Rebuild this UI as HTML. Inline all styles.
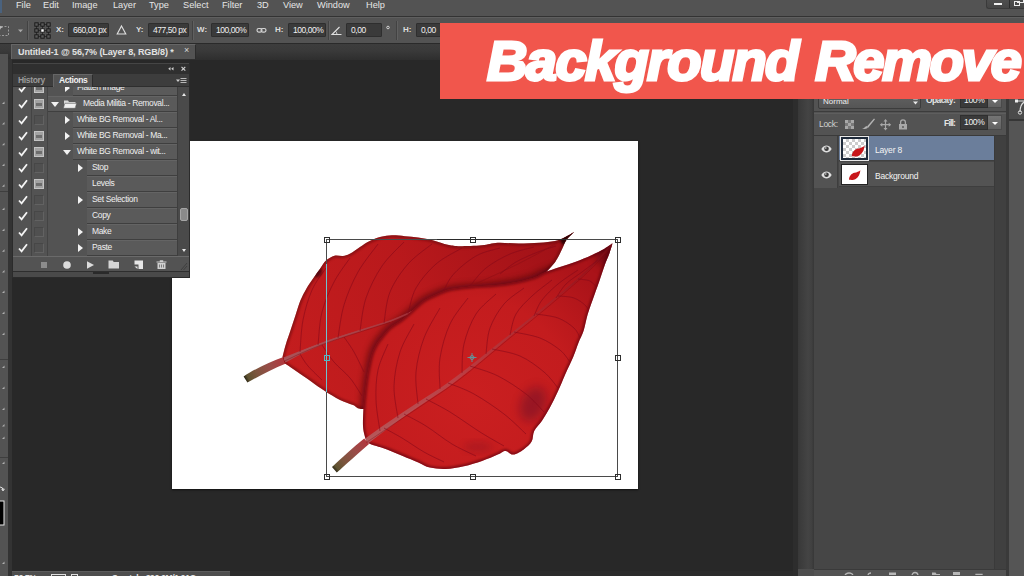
<!DOCTYPE html>
<html lang="en">
<head>
<meta charset="utf-8">
<title>Background Remove</title>
<style>
*{box-sizing:border-box;margin:0;padding:0}
html,body{width:1024px;height:576px;overflow:hidden;background:#282828}
body{position:relative;font-family:"Liberation Sans",sans-serif;font-size:9px;color:#e4e4e4;-webkit-font-smoothing:antialiased}
.abs{position:absolute}
/* ---------- top chrome ---------- */
#menubar{position:absolute;left:0;top:0;width:1024px;height:16px;background:#535353}
#menubar span{position:absolute;top:0px;font-size:9.2px;color:#e6e6e6;white-space:nowrap}
#menuline{position:absolute;left:0;top:16px;width:1024px;height:1px;background:#333}
#optbar{position:absolute;left:0;top:17px;width:1024px;height:26px;background:#535353;border-top:1px solid #5f5f5f}
#optbar .lbl{position:absolute;top:7px;font-size:8px;font-weight:bold;color:#dcdcdc;white-space:nowrap}
#optbar .fld{position:absolute;top:5px;height:14px;background:#3a3a3a;border:1px solid #2e2e2e;border-radius:1px;font-size:8.5px;color:#f0f0f0;line-height:12px;padding-left:4px;white-space:nowrap;letter-spacing:-.45px}
#optbar .sep{position:absolute;top:3px;width:1px;height:19px;background:#424242;border-right:1px solid #606060;box-sizing:content-box}
#tabbar{position:absolute;left:0;top:43px;width:1024px;height:17px;background:linear-gradient(#3d3d3d,#3a3a3a 40%,#2e2e2e);border-top:1px solid #2a2a2a}
#doctab{position:absolute;left:11px;top:44px;width:185px;height:15px;background:#535353;border-left:1px solid #666;border-top:1px solid #666;border-right:1px solid #2c2c2c}
#doctab span{position:absolute;left:6px;top:2px;font-size:9px;font-weight:bold;color:#e2e2e2;white-space:nowrap;letter-spacing:-.1px}
#doctab i{position:absolute;left:172px;top:0px;font-style:normal;font-size:9px;color:#d8d8d8}
/* ---------- left tool strip ---------- */
#ltool{position:absolute;left:0;top:54px;width:8px;height:522px;background:#535353}
#ltoolgap{position:absolute;left:8px;top:59px;width:4px;height:517px;background:#333}
/* ---------- canvas ---------- */
#canvas{position:absolute;left:12px;top:59px;width:786px;height:512px;background:#282828}
#doc{position:absolute;left:172px;top:141px;width:466px;height:348px;background:#fff;box-shadow:0 1px 2px rgba(0,0,0,.6)}
#art{position:absolute;left:0;top:0;width:1024px;height:576px;pointer-events:none}
/* ---------- banner ---------- */
#banner{position:absolute;left:440px;top:23px;width:584px;height:76px;background:#f1564c;overflow:hidden}
#banner span{position:absolute;left:47px;top:6px;font-size:56px;line-height:64px;font-weight:bold;font-style:italic;color:#fff;white-space:nowrap;letter-spacing:-1.6px;-webkit-text-stroke:3px #fff;transform-origin:0 50%}#banner span b{font-weight:bold;letter-spacing:-2.25px;margin-left:3.5px}

/* ---------- actions panel ---------- */
#ap{position:absolute;left:12px;top:63px;width:178px;height:215px;background:#535353;border:1px solid #2b2b2b;border-top:none}
#aphead{position:absolute;left:0;top:0;width:176px;height:11px;background:#2f2f2f;border-top:1px solid #454545}
#aptabs{position:absolute;left:0;top:11px;width:176px;height:13px;background:#3d3d3d;border-bottom:1px solid #2e2e2e}
#aptabs .t1{position:absolute;left:5px;top:1px;font-size:8.5px;font-weight:bold;color:#9a9a9a;letter-spacing:-.35px}
#aptabs .t2{position:absolute;left:40px;top:0;width:40px;height:13px;background:#535353;border-left:1px solid #666;border-right:1px solid #2c2c2c;border-top:1px solid #666}
#aptabs .t2 span{position:absolute;left:5px;top:0px;font-size:8.5px;font-weight:bold;color:#f0f0f0;letter-spacing:-.42px}
#aplist{position:absolute;left:0;top:24px;width:176px;height:169px;overflow:hidden;background:#535353}
.row{position:absolute;left:0;width:165px;height:16px}
.row .bg{position:absolute;top:0;right:0;height:16px;background:#5a5a5a;border-top:1px solid #646464;border-bottom:1px solid #3f3f3f}
.row .tx{position:absolute;top:2px;font-size:8.5px;color:#efefef;white-space:nowrap;letter-spacing:-.35px}
.row .ck{position:absolute;left:5px;top:3px;width:10px;height:10px}
.row .bx{position:absolute;left:21px;top:3px;width:10px;height:10px;border:1px solid #474747;border-right-color:#626262;border-bottom-color:#626262;background:#505050}
.row .bx.on{background:#a2a2a2;border-color:#c4c4c4}
.row .bx.on:after{content:"";position:absolute;left:1px;top:3px;width:6px;height:3px;background:#6e6e6e}
.row .tri{position:absolute;top:4px;width:0;height:0;border-left:5px solid #f2f2f2;border-top:4px solid transparent;border-bottom:4px solid transparent}
.row .trd{position:absolute;top:6px;width:0;height:0;border-top:5px solid #f2f2f2;border-left:4px solid transparent;border-right:4px solid transparent}
#apv1{position:absolute;left:18px;top:0;width:1px;height:169px;background:#444}
#apv2{position:absolute;left:34px;top:0;width:1px;height:169px;background:#444}
#apsb{position:absolute;left:164px;top:0;width:12px;height:169px;background:#4a4a4a;border-left:1px solid #3e3e3e}
#apsb .th{position:absolute;left:2px;top:121px;width:8px;height:13px;background:#8a8a8a;border-radius:2px;border:1px solid #a5a5a5}
#apsb .ua{position:absolute;left:4px;top:6px;width:0;height:0;border-bottom:3px solid #e8e8e8;border-left:2.5px solid transparent;border-right:2.5px solid transparent}
#apsb .da{position:absolute;left:4px;top:162px;width:0;height:0;border-top:3px solid #e8e8e8;border-left:2.5px solid transparent;border-right:2.5px solid transparent}
#apbar{position:absolute;left:0;top:193px;width:176px;height:15px;background:#535353;border-top:1px solid #6a6a6a}
#apfoot{position:absolute;left:0;top:208px;width:176px;height:6px;background:#4a4a4a;border-top:1px solid #2e2e2e}
#apfoot:after{content:"";position:absolute;left:80px;top:0;width:16px;height:2px;background:#2a2a2a}

/* ---------- right dock ---------- */
#rgrad{position:absolute;left:793px;top:59px;width:21px;height:517px;background:linear-gradient(90deg,#2d2d2d 0,#2d2d2d 5px,#383838 5px,#444 15px,#404040 19px,#393939 20px,#393939 21px)}
#rp{position:absolute;left:814px;top:59px;width:192px;height:517px;background:#535353}
#rp .r1{position:absolute;left:0;top:40px;width:192px;height:13px;background:#535353;border-bottom:1px solid #3c3c3c}
#rp .r2{position:absolute;left:0;top:54px;width:192px;height:23px;background:#535353;border-top:1px solid #5e5e5e;border-bottom:1px solid #3a3a3a}
#rp .sel{position:absolute;left:4px;top:29px;width:103px;height:21px;background:linear-gradient(#666,#555);border:1px solid #3c3c3c;border-radius:2px}
#rp .sel span{position:absolute;left:4px;top:8px;font-size:8px;color:#eee}
#rp .lb{position:absolute;font-size:8.5px;font-weight:bold;color:#e4e4e4;white-space:nowrap;letter-spacing:-.3px}
#rp .vb{position:absolute;width:28px;height:15px;background:#3a3a3a;border:1px solid #2f2f2f;font-size:8.5px;color:#f2f2f2;line-height:13px;padding-left:3px;letter-spacing:-.3px}
#rp .ab{position:absolute;width:14px;height:15px;background:linear-gradient(#747474,#626262);border:1px solid #4a4a4a;border-left:none}
#rp .ab:after{content:"";position:absolute;left:4px;top:6px;width:0;height:0;border-top:3px solid #fff;border-left:3px solid transparent;border-right:3px solid transparent}
#llist{position:absolute;left:0;top:77px;width:192px;height:434px;background:#464646}
#llist .eyecol{position:absolute;left:0;top:0;width:24px;height:52px;background:#535353;border-right:1px solid #3e3e3e}
#llist .lrow{position:absolute;left:25px;width:155px;height:25px;background:#535353;border-bottom:1px solid #3e3e3e}
#llist .lrow.on{background:#6b7e9b}
#llist .lrow span{position:absolute;left:36px;top:9px;font-size:8.5px;color:#f4f4f4;letter-spacing:-.2px}
#llist .th{position:absolute;left:2px;top:2px;width:27px;height:21px;background:#fff;border:1px solid #222;overflow:hidden}
#llist .on .th{outline:1px solid #e8e8e8;border:2px solid #1e2a3a;left:2px;top:1px;width:27px;height:23px}
#lsb{position:absolute;left:180px;top:77px;width:12px;height:434px;background:#404040;border-left:1px solid #3a3a3a}
#lfoot{position:absolute;left:0;top:510px;width:192px;height:7px;background:#535353;border-top:1px solid #3a3a3a}
#fr{position:absolute;left:1006px;top:59px;width:18px;height:517px;background:#555;border-left:3px solid #3a3a3a}
#fr .top{position:absolute;left:0;top:0;width:15px;height:62px;overflow:hidden;background:#4b4b4b;border-bottom:2px solid #363636}

#pslogo{position:absolute;left:0;top:0;width:2px;height:13px;background:#4a627e}
#winbtn{position:absolute;left:986px;top:0;width:38px;height:9px;background:linear-gradient(#4e4e4e,#464646);border:1px solid #3a3a3a;border-top:none;border-right:none;border-radius:0 0 0 3px}
#winbtn:before{content:"";position:absolute;left:7px;top:3px;width:8px;height:2px;background:#f0f0f0}
#winbtn:after{content:"";position:absolute;left:22px;top:0;width:1px;height:8px;background:#2c2c2c}
#winbtn i{position:absolute;left:27px;top:1px;width:6px;height:5px;border:1.5px solid #eee}#winbtn b{position:absolute;left:30px;top:-2px;width:7px;height:5px;border:1.5px solid #eee;border-left:none}
#status{position:absolute;left:12px;top:571px;width:218px;height:5px;background:#4e4e4e;border-top:1px solid #5c5c5c;overflow:hidden}
#status span{position:absolute;top:1px;font-size:8.5px;font-weight:bold;color:#e6e6e6;white-space:nowrap;letter-spacing:-.3px}
#hscroll{position:absolute;left:230px;top:571px;width:563px;height:5px;background:#2b2b2b}#rcorner{position:absolute;left:798px;top:569px;width:16px;height:7px;background:#4d4d4d}
</style>
</head>
<body>
<!-- canvas -->
<div id="canvas"></div>
<div id="doc"></div>
<svg id="art" width="1024" height="576" viewBox="0 0 1024 576">
<defs>
<linearGradient id="gb" x1="290" y1="380" x2="560" y2="240" gradientUnits="userSpaceOnUse"><stop offset="0" stop-color="#c41d1e"/><stop offset=".5" stop-color="#b9191c"/><stop offset="1" stop-color="#a01117"/></linearGradient>
<radialGradient id="gf" cx="470" cy="400" r="170" gradientUnits="userSpaceOnUse"><stop offset="0" stop-color="#ca1f20"/><stop offset=".6" stop-color="#c31c1e"/><stop offset="1" stop-color="#aa1319"/></radialGradient>
<linearGradient id="gs1" x1="245" y1="379" x2="284" y2="360" gradientUnits="userSpaceOnUse"><stop offset="0" stop-color="#2a2414"/><stop offset=".08" stop-color="#5e5230"/><stop offset=".3" stop-color="#7c553e"/><stop offset=".65" stop-color="#9a4c48"/><stop offset="1" stop-color="#b2383e"/></linearGradient>
<linearGradient id="gs2" x1="334" y1="470" x2="366" y2="441" gradientUnits="userSpaceOnUse"><stop offset="0" stop-color="#2a2414"/><stop offset=".08" stop-color="#5e5230"/><stop offset=".3" stop-color="#7c553e"/><stop offset=".65" stop-color="#9a4c48"/><stop offset="1" stop-color="#b2383e"/></linearGradient>
<linearGradient id="gmv" x1="366" y1="441" x2="612" y2="244" gradientUnits="userSpaceOnUse"><stop offset="0" stop-color="#b45a5c" stop-opacity=".95"/><stop offset=".35" stop-color="#b8484e" stop-opacity=".8"/><stop offset=".75" stop-color="#a2222a" stop-opacity=".6"/><stop offset="1" stop-color="#7a0c16" stop-opacity=".6"/></linearGradient>
<linearGradient id="gmb" x1="284" y1="360" x2="420" y2="308" gradientUnits="userSpaceOnUse"><stop offset="0" stop-color="#a8555a" stop-opacity=".95"/><stop offset="1" stop-color="#a8343c" stop-opacity=".6"/></linearGradient>
<clipPath id="cb"><path d="M282.5 357.0C282.5 357.0 284.4 348.9 285.8 344.4C287.2 339.9 289.1 334.7 290.7 329.8C292.3 324.9 293.9 320.1 295.5 315.2C297.1 310.3 298.6 305.1 300.4 300.6C302.2 296.1 304.3 292.3 306.5 288.4C308.7 284.5 311.6 280.6 313.8 277.4C316.0 274.1 317.9 271.7 319.9 268.9C321.9 266.1 323.6 262.8 326.0 260.6C328.4 258.4 331.7 256.5 334.5 255.7C337.3 254.9 340.4 256.4 343.0 256.0C345.6 255.6 347.5 255.0 350.3 253.5C353.1 252.0 356.8 249.1 360.0 247.0C363.2 244.9 366.3 242.7 369.8 241.0C373.3 239.3 377.3 237.8 381.0 236.8C384.7 235.9 388.0 235.4 392.0 235.3C396.0 235.2 400.7 235.8 405.0 236.2C409.3 236.6 413.8 237.0 418.0 237.6C422.2 238.2 426.3 238.7 430.0 239.5C433.7 240.3 436.8 241.5 440.0 242.4C443.2 243.3 445.7 244.4 449.0 245.0C452.3 245.6 454.5 246.1 460.0 246.2C465.5 246.2 475.7 245.9 482.0 245.3C488.3 244.7 491.6 243.0 497.7 242.7C503.8 242.4 511.6 243.5 518.5 243.5C525.5 243.5 533.3 243.1 539.4 242.7C545.5 242.3 550.7 241.9 555.0 241.0C559.3 240.1 562.1 238.5 565.4 237.0C568.6 235.5 574.5 231.8 574.5 231.8C574.5 231.8 568.7 237.0 566.7 239.6C564.8 242.2 564.3 244.4 562.8 247.4C561.3 250.4 559.8 254.4 557.6 257.9C555.4 261.4 556.1 261.3 549.8 268.3C543.5 275.3 536.6 281.4 520.0 300.0C503.4 318.6 470.0 362.5 450.0 380.0C430.0 397.5 414.4 400.2 400.0 405.0C385.6 409.8 371.4 409.0 363.6 409.0C355.8 409.0 356.9 406.5 353.0 405.0C349.1 403.5 344.8 402.4 340.0 400.0C335.2 397.6 329.2 393.9 324.5 390.8C319.8 387.8 316.2 385.0 311.5 381.7C306.8 378.4 300.4 374.0 296.0 371.0C291.6 368.0 285.0 363.6 285.0 363.6C285.0 363.6 282.5 357.0 282.5 357.0Z"/></clipPath><clipPath id="cf"><path d="M366.0 440.0C366.0 440.0 365.0 437.3 364.5 435.0C364.0 432.7 363.2 430.2 363.0 426.0C362.8 421.8 363.1 415.7 363.4 410.0C363.7 404.3 364.3 398.0 365.0 392.0C365.7 386.0 366.4 380.0 367.5 373.9C368.6 367.8 370.0 360.4 371.4 355.6C372.8 350.8 374.5 347.8 376.0 345.0C377.5 342.2 378.2 341.4 380.5 338.6C382.8 335.8 385.9 331.3 389.6 328.0C393.3 324.7 398.8 322.0 402.7 319.0C406.6 316.0 409.5 313.0 413.0 310.0C416.5 307.0 419.6 303.4 423.5 300.8C427.4 298.2 431.9 296.3 436.5 294.3C441.1 292.3 444.9 290.3 450.8 289.0C456.7 287.7 464.8 287.1 471.7 286.5C478.6 285.9 485.6 285.8 492.5 285.2C499.4 284.6 506.4 283.9 513.3 282.6C520.2 281.3 528.8 279.1 534.0 277.4C539.2 275.7 540.3 273.9 544.6 272.2C548.9 270.5 554.8 268.8 560.0 267.0C565.2 265.2 570.5 263.7 575.8 261.7C581.0 259.7 586.7 257.4 591.5 255.2C596.3 253.0 601.0 250.7 604.5 248.7C608.0 246.7 612.5 243.3 612.5 243.3C612.5 243.3 611.0 248.9 609.7 252.6C608.4 256.3 606.2 260.9 604.5 265.7C602.8 270.5 601.2 275.7 599.3 281.3C597.3 286.9 594.8 293.9 592.8 299.5C590.8 305.1 589.0 309.8 587.5 315.0C586.0 320.2 585.1 326.1 583.6 330.8C582.1 335.5 580.1 338.6 578.4 343.0C576.7 347.4 575.4 351.9 573.2 357.0C571.0 362.1 568.0 368.1 565.4 373.9C562.8 379.7 560.2 386.4 557.6 392.0C555.0 397.6 552.4 402.9 549.8 407.7C547.2 412.5 544.6 416.8 542.0 420.7C539.4 424.6 535.9 427.5 534.2 431.0C532.5 434.5 533.4 438.5 531.6 441.6C529.9 444.7 526.8 447.2 523.7 449.4C520.7 451.6 516.3 454.4 513.3 454.6C510.3 454.9 508.1 450.9 505.5 450.9C502.9 450.9 501.6 452.9 497.7 454.6C493.8 456.3 487.6 459.1 482.0 461.0C476.4 462.9 470.0 465.0 463.9 466.3C457.8 467.6 451.2 468.8 445.6 469.0C440.0 469.2 434.6 468.7 430.0 467.6C425.4 466.5 422.9 464.3 418.3 462.4C413.8 460.4 407.9 458.1 402.7 455.9C397.5 453.7 392.2 451.3 387.0 449.4C381.8 447.5 374.8 445.5 371.4 444.4C368.0 443.3 366.8 442.6 366.8 442.6C366.8 442.6 366.0 440.0 366.0 440.0Z"/></clipPath>
<filter id="bl3" x="-20%" y="-20%" width="140%" height="140%"><feGaussianBlur stdDeviation="3"/></filter>
<filter id="bl1" x="-20%" y="-20%" width="140%" height="140%"><feGaussianBlur stdDeviation="1.2"/></filter>
<filter id="bl5" x="-50%" y="-50%" width="200%" height="200%"><feGaussianBlur stdDeviation="5"/></filter>
</defs>
<path d="M243.6 376.6L247.4 382.6C258 376.600 272 369 286 363.400L283.500 357C270 361.600 254 369.400 243.600 376.600Z" fill="url(#gs1)"/>
<path d="M282.5 357.0C282.5 357.0 284.4 348.9 285.8 344.4C287.2 339.9 289.1 334.7 290.7 329.8C292.3 324.9 293.9 320.1 295.5 315.2C297.1 310.3 298.6 305.1 300.4 300.6C302.2 296.1 304.3 292.3 306.5 288.4C308.7 284.5 311.6 280.6 313.8 277.4C316.0 274.1 317.9 271.7 319.9 268.9C321.9 266.1 323.6 262.8 326.0 260.6C328.4 258.4 331.7 256.5 334.5 255.7C337.3 254.9 340.4 256.4 343.0 256.0C345.6 255.6 347.5 255.0 350.3 253.5C353.1 252.0 356.8 249.1 360.0 247.0C363.2 244.9 366.3 242.7 369.8 241.0C373.3 239.3 377.3 237.8 381.0 236.8C384.7 235.9 388.0 235.4 392.0 235.3C396.0 235.2 400.7 235.8 405.0 236.2C409.3 236.6 413.8 237.0 418.0 237.6C422.2 238.2 426.3 238.7 430.0 239.5C433.7 240.3 436.8 241.5 440.0 242.4C443.2 243.3 445.7 244.4 449.0 245.0C452.3 245.6 454.5 246.1 460.0 246.2C465.5 246.2 475.7 245.9 482.0 245.3C488.3 244.7 491.6 243.0 497.7 242.7C503.8 242.4 511.6 243.5 518.5 243.5C525.5 243.5 533.3 243.1 539.4 242.7C545.5 242.3 550.7 241.9 555.0 241.0C559.3 240.1 562.1 238.5 565.4 237.0C568.6 235.5 574.5 231.8 574.5 231.8C574.5 231.8 568.7 237.0 566.7 239.6C564.8 242.2 564.3 244.4 562.8 247.4C561.3 250.4 559.8 254.4 557.6 257.9C555.4 261.4 556.1 261.3 549.8 268.3C543.5 275.3 536.6 281.4 520.0 300.0C503.4 318.6 470.0 362.5 450.0 380.0C430.0 397.5 414.4 400.2 400.0 405.0C385.6 409.8 371.4 409.0 363.6 409.0C355.8 409.0 356.9 406.5 353.0 405.0C349.1 403.5 344.8 402.4 340.0 400.0C335.2 397.6 329.2 393.9 324.5 390.8C319.8 387.8 316.2 385.0 311.5 381.7C306.8 378.4 300.4 374.0 296.0 371.0C291.6 368.0 285.0 363.6 285.0 363.6C285.0 363.6 282.5 357.0 282.5 357.0Z" fill="url(#gb)"/>
<g clip-path="url(#cb)">
<path d="M282.5 357.0C282.5 357.0 284.4 348.9 285.8 344.4C287.2 339.9 289.1 334.7 290.7 329.8C292.3 324.9 293.9 320.1 295.5 315.2C297.1 310.3 298.6 305.1 300.4 300.6C302.2 296.1 304.3 292.3 306.5 288.4C308.7 284.5 311.6 280.6 313.8 277.4C316.0 274.1 317.9 271.7 319.9 268.9C321.9 266.1 323.6 262.8 326.0 260.6C328.4 258.4 331.7 256.5 334.5 255.7C337.3 254.9 340.4 256.4 343.0 256.0C345.6 255.6 347.5 255.0 350.3 253.5C353.1 252.0 356.8 249.1 360.0 247.0C363.2 244.9 366.3 242.7 369.8 241.0C373.3 239.3 377.3 237.8 381.0 236.8C384.7 235.9 388.0 235.4 392.0 235.3C396.0 235.2 400.7 235.8 405.0 236.2C409.3 236.6 413.8 237.0 418.0 237.6C422.2 238.2 426.3 238.7 430.0 239.5C433.7 240.3 436.8 241.5 440.0 242.4C443.2 243.3 445.7 244.4 449.0 245.0C452.3 245.6 454.5 246.1 460.0 246.2C465.5 246.2 475.7 245.9 482.0 245.3C488.3 244.7 491.6 243.0 497.7 242.7C503.8 242.4 511.6 243.5 518.5 243.5C525.5 243.5 533.3 243.1 539.4 242.7C545.5 242.3 550.7 241.9 555.0 241.0C559.3 240.1 562.1 238.5 565.4 237.0C568.6 235.5 574.5 231.8 574.5 231.8C574.5 231.8 568.7 237.0 566.7 239.6C564.8 242.2 564.3 244.4 562.8 247.4C561.3 250.4 559.8 254.4 557.6 257.9C555.4 261.4 556.1 261.3 549.8 268.3C543.5 275.3 536.6 281.4 520.0 300.0C503.4 318.6 470.0 362.5 450.0 380.0C430.0 397.5 414.4 400.2 400.0 405.0C385.6 409.8 371.4 409.0 363.6 409.0C355.8 409.0 356.9 406.5 353.0 405.0C349.1 403.5 344.8 402.4 340.0 400.0C335.2 397.6 329.2 393.9 324.5 390.8C319.8 387.8 316.2 385.0 311.5 381.7C306.8 378.4 300.4 374.0 296.0 371.0C291.6 368.0 285.0 363.6 285.0 363.6C285.0 363.6 282.5 357.0 282.5 357.0Z" fill="none" stroke="#5e0710" stroke-width="4" opacity=".55" filter="url(#bl1)"/>
<path d="M366.0 440.0C366.0 440.0 365.0 437.3 364.5 435.0C364.0 432.7 363.2 430.2 363.0 426.0C362.8 421.8 363.1 415.7 363.4 410.0C363.7 404.3 364.3 398.0 365.0 392.0C365.7 386.0 366.4 380.0 367.5 373.9C368.6 367.8 370.0 360.4 371.4 355.6C372.8 350.8 374.5 347.8 376.0 345.0C377.5 342.2 378.2 341.4 380.5 338.6C382.8 335.8 385.9 331.3 389.6 328.0C393.3 324.7 398.8 322.0 402.7 319.0C406.6 316.0 409.5 313.0 413.0 310.0C416.5 307.0 419.6 303.4 423.5 300.8C427.4 298.2 431.9 296.3 436.5 294.3C441.1 292.3 444.9 290.3 450.8 289.0C456.7 287.7 464.8 287.1 471.7 286.5C478.6 285.9 485.6 285.8 492.5 285.2C499.4 284.6 506.4 283.9 513.3 282.6C520.2 281.3 528.8 279.1 534.0 277.4C539.2 275.7 540.3 273.9 544.6 272.2C548.9 270.5 554.8 268.8 560.0 267.0C565.2 265.2 570.5 263.7 575.8 261.7C581.0 259.7 586.7 257.4 591.5 255.2C596.3 253.0 601.0 250.7 604.5 248.7C608.0 246.7 612.5 243.3 612.5 243.3C612.5 243.3 611.0 248.9 609.7 252.6C608.4 256.3 606.2 260.9 604.5 265.7C602.8 270.5 601.2 275.7 599.3 281.3C597.3 286.9 594.8 293.9 592.8 299.5C590.8 305.1 589.0 309.8 587.5 315.0C586.0 320.2 585.1 326.1 583.6 330.8C582.1 335.5 580.1 338.6 578.4 343.0C576.7 347.4 575.4 351.9 573.2 357.0C571.0 362.1 568.0 368.1 565.4 373.9C562.8 379.7 560.2 386.4 557.6 392.0C555.0 397.6 552.4 402.9 549.8 407.7C547.2 412.5 544.6 416.8 542.0 420.7C539.4 424.6 535.9 427.5 534.2 431.0C532.5 434.5 533.4 438.5 531.6 441.6C529.9 444.7 526.8 447.2 523.7 449.4C520.7 451.6 516.3 454.4 513.3 454.6C510.3 454.9 508.1 450.9 505.5 450.9C502.9 450.9 501.6 452.9 497.7 454.6C493.8 456.3 487.6 459.1 482.0 461.0C476.4 462.9 470.0 465.0 463.9 466.3C457.8 467.6 451.2 468.8 445.6 469.0C440.0 469.2 434.6 468.7 430.0 467.6C425.4 466.5 422.9 464.3 418.3 462.4C413.8 460.4 407.9 458.1 402.7 455.9C397.5 453.7 392.2 451.3 387.0 449.4C381.8 447.5 374.8 445.5 371.4 444.4C368.0 443.3 366.8 442.6 366.8 442.6C366.8 442.6 366.0 440.0 366.0 440.0Z" fill="#3c040a" opacity=".6" filter="url(#bl3)" transform="translate(-3,-2.500)"/>
<path d="M283.500 357.500C300 351 318 343.800 334 338.300C352 332.300 372 326.300 390 320.500L420 307.600L420 308.400L390 322C372 328 352 334.200 334 340.400C318 346 300 354 285.500 362.500Z" fill="url(#gmb)"/>
<path d="M284 360C300 352 318 344.500 334 339C352 333 372 327 390 321C400 317.500 410 313 420 308" fill="none" stroke="url(#gmb)" stroke-width="1.6"/>
<path d="M284 361.300C300 353.300 318 345.800 334 340.300C352 334.300 372 328.300 390 322.300" fill="none" stroke="#7c0b14" stroke-width=".7" opacity=".6"/>
<path d="M300.0 352.0C300.5 346.7 301.0 330.3 303.0 320.0C305.0 309.7 308.2 298.7 312.0 290.0C315.8 281.3 323.7 271.7 326.0 268.0" fill="none" stroke="#85091a" stroke-width="1" opacity="0.58"/>
<path d="M318.0 345.0C318.7 339.5 319.3 322.5 322.0 312.0C324.7 301.5 329.3 291.0 334.0 282.0C338.7 273.0 347.3 262.0 350.0 258.0" fill="none" stroke="#85091a" stroke-width="1" opacity="0.58"/>
<path d="M338.0 338.0C339.0 332.5 340.7 316.0 344.0 305.0C347.3 294.0 352.3 282.2 358.0 272.0C363.7 261.8 374.7 248.7 378.0 244.0" fill="none" stroke="#85091a" stroke-width="1" opacity="0.58"/>
<path d="M360.0 331.0C361.0 325.5 362.3 308.8 366.0 298.0C369.7 287.2 375.7 275.3 382.0 266.0C388.3 256.7 400.3 246.0 404.0 242.0" fill="none" stroke="#85091a" stroke-width="1" opacity="0.58"/>
<path d="M384.0 323.0C385.0 317.8 386.0 301.8 390.0 292.0C394.0 282.2 401.0 272.0 408.0 264.0C415.0 256.0 428.0 247.3 432.0 244.0" fill="none" stroke="#85091a" stroke-width="1" opacity="0.58"/>
<path d="M408.0 314.0C409.3 309.7 411.3 296.3 416.0 288.0C420.7 279.7 428.3 270.7 436.0 264.0C443.7 257.3 457.7 250.7 462.0 248.0" fill="none" stroke="#85091a" stroke-width="1" opacity="0.58"/>
<path d="M300.0 354.0C301.3 356.0 304.3 361.7 308.0 366.0C311.7 370.3 319.7 377.7 322.0 380.0" fill="none" stroke="#85091a" stroke-width="1" opacity="0.58"/>
<path d="M322.0 345.0C324.0 347.8 329.3 356.5 334.0 362.0C338.7 367.5 345.3 372.3 350.0 378.0C354.7 383.7 360.0 393.0 362.0 396.0" fill="none" stroke="#85091a" stroke-width="1" opacity="0.58"/>
<path d="M344.0 337.0C345.7 339.5 350.7 346.2 354.0 352.0C357.3 357.8 362.3 368.7 364.0 372.0" fill="none" stroke="#85091a" stroke-width="1" opacity="0.58"/>
<path d="M440.0 300.0C442.0 296.0 446.0 283.3 452.0 276.0C458.0 268.7 468.0 260.7 476.0 256.0C484.0 251.3 496.0 249.3 500.0 248.0" fill="none" stroke="#85091a" stroke-width="1" opacity="0.58"/>
<path d="M470.0 286.0C472.7 283.0 479.3 273.3 486.0 268.0C492.7 262.7 502.0 257.5 510.0 254.0C518.0 250.5 530.0 248.2 534.0 247.0" fill="none" stroke="#85091a" stroke-width="1" opacity="0.58"/>
<path d="M500.0 274.0C502.7 272.0 509.7 265.7 516.0 262.0C522.3 258.3 531.3 254.7 538.0 252.0C544.7 249.3 553.0 247.0 556.0 246.0" fill="none" stroke="#85091a" stroke-width="1" opacity="0.58"/>
<path d="M420 308C470 286 530 262 574 232" fill="none" stroke="#8a0d16" stroke-width="1" opacity=".5"/>
<ellipse cx="571" cy="236" rx="7" ry="12" fill="#1a0206" opacity=".8" filter="url(#bl1)" transform="rotate(55 571 236)"/>
<ellipse cx="318.500" cy="273" rx="3" ry="5" fill="#2a0308" opacity=".6" filter="url(#bl1)" transform="rotate(35 318.500 273)"/>
</g>
<path d="M332 467L336.800 472.600C346 464.600 357.500 453.600 369 444L364.200 438.400C353 447.400 341 458.400 332 467Z" fill="url(#gs2)"/>
<path d="M366.0 440.0C366.0 440.0 365.0 437.3 364.5 435.0C364.0 432.7 363.2 430.2 363.0 426.0C362.8 421.8 363.1 415.7 363.4 410.0C363.7 404.3 364.3 398.0 365.0 392.0C365.7 386.0 366.4 380.0 367.5 373.9C368.6 367.8 370.0 360.4 371.4 355.6C372.8 350.8 374.5 347.8 376.0 345.0C377.5 342.2 378.2 341.4 380.5 338.6C382.8 335.8 385.9 331.3 389.6 328.0C393.3 324.7 398.8 322.0 402.7 319.0C406.6 316.0 409.5 313.0 413.0 310.0C416.5 307.0 419.6 303.4 423.5 300.8C427.4 298.2 431.9 296.3 436.5 294.3C441.1 292.3 444.9 290.3 450.8 289.0C456.7 287.7 464.8 287.1 471.7 286.5C478.6 285.9 485.6 285.8 492.5 285.2C499.4 284.6 506.4 283.9 513.3 282.6C520.2 281.3 528.8 279.1 534.0 277.4C539.2 275.7 540.3 273.9 544.6 272.2C548.9 270.5 554.8 268.8 560.0 267.0C565.2 265.2 570.5 263.7 575.8 261.7C581.0 259.7 586.7 257.4 591.5 255.2C596.3 253.0 601.0 250.7 604.5 248.7C608.0 246.7 612.5 243.3 612.5 243.3C612.5 243.3 611.0 248.9 609.7 252.6C608.4 256.3 606.2 260.9 604.5 265.7C602.8 270.5 601.2 275.7 599.3 281.3C597.3 286.9 594.8 293.9 592.8 299.5C590.8 305.1 589.0 309.8 587.5 315.0C586.0 320.2 585.1 326.1 583.6 330.8C582.1 335.5 580.1 338.6 578.4 343.0C576.7 347.4 575.4 351.9 573.2 357.0C571.0 362.1 568.0 368.1 565.4 373.9C562.8 379.7 560.2 386.4 557.6 392.0C555.0 397.6 552.4 402.9 549.8 407.7C547.2 412.5 544.6 416.8 542.0 420.7C539.4 424.6 535.9 427.5 534.2 431.0C532.5 434.5 533.4 438.5 531.6 441.6C529.9 444.7 526.8 447.2 523.7 449.4C520.7 451.6 516.3 454.4 513.3 454.6C510.3 454.9 508.1 450.9 505.5 450.9C502.9 450.9 501.6 452.9 497.7 454.6C493.8 456.3 487.6 459.1 482.0 461.0C476.4 462.9 470.0 465.0 463.9 466.3C457.8 467.6 451.2 468.8 445.6 469.0C440.0 469.2 434.6 468.7 430.0 467.6C425.4 466.5 422.9 464.3 418.3 462.4C413.8 460.4 407.9 458.1 402.7 455.9C397.5 453.7 392.2 451.3 387.0 449.4C381.8 447.5 374.8 445.5 371.4 444.4C368.0 443.3 366.8 442.6 366.8 442.6C366.8 442.6 366.0 440.0 366.0 440.0Z" fill="url(#gf)"/>
<g clip-path="url(#cf)">
<path d="M366.0 440.0C366.0 440.0 365.0 437.3 364.5 435.0C364.0 432.7 363.2 430.2 363.0 426.0C362.8 421.8 363.1 415.7 363.4 410.0C363.7 404.3 364.3 398.0 365.0 392.0C365.7 386.0 366.4 380.0 367.5 373.9C368.6 367.8 370.0 360.4 371.4 355.6C372.8 350.8 374.5 347.8 376.0 345.0C377.5 342.2 378.2 341.4 380.5 338.6C382.8 335.8 385.9 331.3 389.6 328.0C393.3 324.7 398.8 322.0 402.7 319.0C406.6 316.0 409.5 313.0 413.0 310.0C416.5 307.0 419.6 303.4 423.5 300.8C427.4 298.2 431.9 296.3 436.5 294.3C441.1 292.3 444.9 290.3 450.8 289.0C456.7 287.7 464.8 287.1 471.7 286.5C478.6 285.9 485.6 285.8 492.5 285.2C499.4 284.6 506.4 283.9 513.3 282.6C520.2 281.3 528.8 279.1 534.0 277.4C539.2 275.7 540.3 273.9 544.6 272.2C548.9 270.5 554.8 268.8 560.0 267.0C565.2 265.2 570.5 263.7 575.8 261.7C581.0 259.7 586.7 257.4 591.5 255.2C596.3 253.0 601.0 250.7 604.5 248.7C608.0 246.7 612.5 243.3 612.5 243.3C612.5 243.3 611.0 248.9 609.7 252.6C608.4 256.3 606.2 260.9 604.5 265.7C602.8 270.5 601.2 275.7 599.3 281.3C597.3 286.9 594.8 293.9 592.8 299.5C590.8 305.1 589.0 309.8 587.5 315.0C586.0 320.2 585.1 326.1 583.6 330.8C582.1 335.5 580.1 338.6 578.4 343.0C576.7 347.4 575.4 351.9 573.2 357.0C571.0 362.1 568.0 368.1 565.4 373.9C562.8 379.7 560.2 386.4 557.6 392.0C555.0 397.6 552.4 402.9 549.8 407.7C547.2 412.5 544.6 416.8 542.0 420.7C539.4 424.6 535.9 427.5 534.2 431.0C532.5 434.5 533.4 438.5 531.6 441.6C529.9 444.7 526.8 447.2 523.7 449.4C520.7 451.6 516.3 454.4 513.3 454.6C510.3 454.9 508.1 450.9 505.5 450.9C502.9 450.9 501.6 452.9 497.7 454.6C493.8 456.3 487.6 459.1 482.0 461.0C476.4 462.9 470.0 465.0 463.9 466.3C457.8 467.6 451.2 468.8 445.6 469.0C440.0 469.2 434.6 468.7 430.0 467.6C425.4 466.5 422.9 464.3 418.3 462.4C413.8 460.4 407.9 458.1 402.7 455.9C397.5 453.7 392.2 451.3 387.0 449.4C381.8 447.5 374.8 445.5 371.4 444.4C368.0 443.3 366.8 442.6 366.8 442.6C366.8 442.6 366.0 440.0 366.0 440.0Z" fill="none" stroke="#5a0610" stroke-width="4" opacity=".6" filter="url(#bl1)"/>
<ellipse cx="612" cy="246" rx="14" ry="22" fill="#4a050c" opacity=".55" filter="url(#bl5)" transform="rotate(30 612 246)"/>
<ellipse cx="533" cy="404" rx="12" ry="18" fill="#5c0a2a" opacity=".42" filter="url(#bl5)" transform="rotate(25 533 404)"/>
<ellipse cx="478" cy="447" rx="14" ry="6" fill="#7a0c22" opacity=".25" filter="url(#bl3)"/>
<path d="M364.500 439C390 420.500 414 404.800 438 389.500C462 373.700 488 351 510 334.200L576 280.600L576 281.400L510 336C488 353.400 462 376.600 438 392.500C414 408.800 390 426.600 368 443.500Z" fill="url(#gmv)"/>
<path d="M366 441C390 425 414 409 438 393C462 377.500 488 354 510 336C534 317 556 298.500 576 281C590 269 602 256 612 244" fill="none" stroke="url(#gmv)" stroke-width="1.5"/>
<path d="M366 441C390 425 414 409 438 393C462 377.500 488 354 510 336C534 317 556 298.500 576 281C590 269 602 256 612 244" fill="none" stroke="#7c0b14" stroke-width=".7" opacity=".55" transform="translate(.8,1.2)"/>
<path d="M380.0 431.0C379.3 425.8 376.3 410.2 376.0 400.0C375.7 389.8 376.0 379.3 378.0 370.0C380.0 360.7 386.3 348.3 388.0 344.0" fill="none" stroke="#85091a" stroke-width="1" opacity="0.58"/>
<path d="M398.0 418.0C397.3 412.7 393.7 397.0 394.0 386.0C394.3 375.0 396.7 362.3 400.0 352.0C403.3 341.7 411.7 328.7 414.0 324.0" fill="none" stroke="#85091a" stroke-width="1" opacity="0.58"/>
<path d="M418.0 404.0C417.7 398.7 415.0 383.0 416.0 372.0C417.0 361.0 420.0 348.7 424.0 338.0C428.0 327.3 437.3 313.0 440.0 308.0" fill="none" stroke="#85091a" stroke-width="1" opacity="0.58"/>
<path d="M440.0 389.0C440.0 383.8 438.3 368.8 440.0 358.0C441.7 347.2 445.3 334.0 450.0 324.0C454.7 314.0 465.0 302.3 468.0 298.0" fill="none" stroke="#85091a" stroke-width="1" opacity="0.58"/>
<path d="M462.0 373.0C462.3 368.2 461.7 353.8 464.0 344.0C466.3 334.2 470.7 322.3 476.0 314.0C481.3 305.7 492.7 297.3 496.0 294.0" fill="none" stroke="#85091a" stroke-width="1" opacity="0.58"/>
<path d="M486.0 354.0C486.7 349.7 487.0 336.3 490.0 328.0C493.0 319.7 498.3 310.7 504.0 304.0C509.7 297.3 520.7 290.7 524.0 288.0" fill="none" stroke="#85091a" stroke-width="1" opacity="0.58"/>
<path d="M510.0 335.0C511.0 331.5 512.3 320.5 516.0 314.0C519.7 307.5 526.0 301.7 532.0 296.0C538.0 290.3 548.7 282.7 552.0 280.0" fill="none" stroke="#85091a" stroke-width="1" opacity="0.58"/>
<path d="M534.0 316.0C535.3 313.3 538.0 305.3 542.0 300.0C546.0 294.7 552.0 289.0 558.0 284.0C564.0 279.0 574.7 272.3 578.0 270.0" fill="none" stroke="#85091a" stroke-width="1" opacity="0.58"/>
<path d="M556.0 298.0C557.7 295.7 561.7 288.3 566.0 284.0C570.3 279.7 576.7 276.0 582.0 272.0C587.3 268.0 595.3 262.0 598.0 260.0" fill="none" stroke="#85091a" stroke-width="1" opacity="0.58"/>
<path d="M384.0 428.0C387.0 429.7 395.3 434.0 402.0 438.0C408.7 442.0 417.0 448.0 424.0 452.0C431.0 456.0 440.7 460.3 444.0 462.0" fill="none" stroke="#85091a" stroke-width="1" opacity="0.58"/>
<path d="M404.0 414.0C407.7 416.0 418.0 421.0 426.0 426.0C434.0 431.0 443.7 439.0 452.0 444.0C460.3 449.0 472.0 454.0 476.0 456.0" fill="none" stroke="#85091a" stroke-width="1" opacity="0.58"/>
<path d="M426.0 399.0C430.0 401.2 441.0 406.5 450.0 412.0C459.0 417.5 471.0 426.3 480.0 432.0C489.0 437.7 500.0 443.7 504.0 446.0" fill="none" stroke="#85091a" stroke-width="1" opacity="0.58"/>
<path d="M448.0 383.0C452.3 384.8 464.7 388.8 474.0 394.0C483.3 399.2 495.3 407.3 504.0 414.0C512.7 420.7 522.3 430.7 526.0 434.0" fill="none" stroke="#85091a" stroke-width="1" opacity="0.58"/>
<path d="M470.0 366.0C474.7 367.7 488.7 371.3 498.0 376.0C507.3 380.7 518.3 388.0 526.0 394.0C533.7 400.0 541.0 409.0 544.0 412.0" fill="none" stroke="#85091a" stroke-width="1" opacity="0.58"/>
<path d="M492.0 349.0C496.7 350.2 511.3 352.2 520.0 356.0C528.7 359.8 537.7 366.7 544.0 372.0C550.3 377.3 555.7 385.3 558.0 388.0" fill="none" stroke="#85091a" stroke-width="1" opacity="0.58"/>
<path d="M514.0 332.0C518.3 333.0 532.3 335.0 540.0 338.0C547.7 341.0 555.0 346.0 560.0 350.0C565.0 354.0 568.3 360.0 570.0 362.0" fill="none" stroke="#85091a" stroke-width="1" opacity="0.58"/>
<path d="M536.0 314.0C539.7 314.7 551.7 315.7 558.0 318.0C564.3 320.3 570.3 324.7 574.0 328.0C577.7 331.3 579.0 336.3 580.0 338.0" fill="none" stroke="#85091a" stroke-width="1" opacity="0.58"/>
<path d="M558.0 296.0C560.7 296.3 569.3 296.3 574.0 298.0C578.7 299.7 583.3 303.3 586.0 306.0C588.7 308.7 589.3 312.7 590.0 314.0" fill="none" stroke="#85091a" stroke-width="1" opacity="0.58"/>
<path d="M578.0 279.0C580.0 279.3 586.8 279.5 590.0 281.0C593.2 282.5 595.8 286.8 597.0 288.0" fill="none" stroke="#85091a" stroke-width="1" opacity="0.58"/>
</g>
<g fill="none" stroke="#4a4a4a" stroke-width="1" shape-rendering="crispEdges"><rect x="326.500" y="239.500" width="291" height="237"/></g>
<path d="M326.500 264V392" stroke="#6cc3cf" stroke-width="1" shape-rendering="crispEdges"/>
<path d="M437 239.500H566" stroke="#2a2a2a" stroke-width="1" shape-rendering="crispEdges"/>
<rect x="324.0" y="237.0" width="5" height="5" fill="none" stroke="#2e2e2e" stroke-width="1" shape-rendering="crispEdges"/>
<rect x="470.0" y="237.0" width="5" height="5" fill="none" stroke="#2e2e2e" stroke-width="1" shape-rendering="crispEdges"/>
<rect x="615.0" y="237.0" width="5" height="5" fill="none" stroke="#2e2e2e" stroke-width="1" shape-rendering="crispEdges"/>
<rect x="324.0" y="355.0" width="5" height="5" fill="none" stroke="#4fb8c4" stroke-width="1" shape-rendering="crispEdges"/>
<rect x="615.0" y="355.0" width="5" height="5" fill="none" stroke="#2e2e2e" stroke-width="1" shape-rendering="crispEdges"/>
<rect x="324.0" y="474.0" width="5" height="5" fill="none" stroke="#2e2e2e" stroke-width="1" shape-rendering="crispEdges"/>
<rect x="470.0" y="474.0" width="5" height="5" fill="none" stroke="#2e2e2e" stroke-width="1" shape-rendering="crispEdges"/>
<rect x="615.0" y="474.0" width="5" height="5" fill="none" stroke="#2e2e2e" stroke-width="1" shape-rendering="crispEdges"/>
<g stroke="#52a7b0" stroke-width=".8" fill="none"><circle cx="472" cy="357.500" r="2"/><path d="M472 353v9M467.500 357.500h9"/></g>
</svg>

<!-- top chrome -->
<div id="menubar">
  <span style="left:16px">File</span><span style="left:43px">Edit</span><span style="left:72px">Image</span><span style="left:113px">Layer</span><span style="left:149px">Type</span><span style="left:183px">Select</span><span style="left:222px">Filter</span><span style="left:257px">3D</span><span style="left:283px">View</span><span style="left:317px">Window</span><span style="left:366px">Help</span>
</div>
<div id="menuline"></div><div id="pslogo"></div><div id="winbtn"><b></b><i></i></div>
<div id="optbar">
<svg class="abs" style="left:0;top:0" width="440" height="24" viewBox="0 0 440 24">
 <g fill="none" stroke="#9a9a9a" stroke-width="1" stroke-dasharray="2 1.5"><rect x="-2.500" y="8.500" width="11" height="9"/></g>
 <path d="M-1 7l4 2.500-2 .5-.8 1.800z" fill="#bbb"/>
 <path d="M18 11.500h5l-2.500 2.800z" fill="#a8a8a8"/>
 <g fill="#5a5a5a" stroke="#161616" stroke-width=".9">
  <path d="M36.500 6.500h12v12h-12zM36.500 12.500h12M42.500 6.500v12" stroke="#222" stroke-width=".8" fill="none"/>
  <rect x="34.800" y="4.800" width="3.400" height="3.400"/><rect x="40.800" y="4.800" width="3.400" height="3.400"/><rect x="46.800" y="4.800" width="3.400" height="3.400"/>
  <rect x="34.800" y="10.800" width="3.400" height="3.400"/><rect x="40.800" y="10.800" width="3.400" height="3.400" fill="#fff"/><rect x="46.800" y="10.800" width="3.400" height="3.400"/>
  <rect x="34.800" y="16.800" width="3.400" height="3.400"/><rect x="40.800" y="16.800" width="3.400" height="3.400"/><rect x="46.800" y="16.800" width="3.400" height="3.400"/>
 </g>
 <path d="M121.500 8l4.300 8h-8.600z" fill="none" stroke="#e0e0e0" stroke-width="1.100"/>
 <g fill="none" stroke="#d4d4d4" stroke-width="1.200"><rect x="257" y="10.500" width="5" height="3.600" rx="1.800"/><rect x="261" y="10.500" width="5" height="3.600" rx="1.800"/></g>
 <path d="M341.500 16.500h-9.500l7.500-7.500" fill="none" stroke="#e0e0e0" stroke-width="1.100"/><path d="M337 16.500a4.500 4.500 0 00-1.600-3.400" fill="none" stroke="#e0e0e0" stroke-width=".9"/>
 <circle cx="388" cy="9.500" r="1.300" fill="none" stroke="#ddd" stroke-width=".9"/>
</svg>
<div class="sep" style="left:27px"></div><div class="sep" style="left:192px"></div><div class="sep" style="left:328px"></div><div class="sep" style="left:396px"></div>
  <span class="lbl" style="left:56px">X:</span><div class="fld" style="left:68px;width:41px">660,00 px</div>
  <span class="lbl" style="left:136px">Y:</span><div class="fld" style="left:148px;width:41px">477,50 px</div>
  <span class="lbl" style="left:197px">W:</span><div class="fld" style="left:211px;width:38px">100,00%</div>
  <span class="lbl" style="left:275px">H:</span><div class="fld" style="left:288px;width:38px">100,00%</div>
  <div class="fld" style="left:346px;width:36px">0,00</div>
  <span class="lbl" style="left:403px">H:</span><div class="fld" style="left:416px;width:36px">0,00</div>
</div>
<div id="tabbar"></div>
<div id="doctab"><span>Untitled-1 @ 56,7% (Layer 8, RGB/8) *</span><i>×</i></div>

<div id="ltool"></div><div id="ltoolgap"></div><svg class="abs" style="left:0;top:0" width="12" height="576" viewBox="0 0 12 576"><path d="M4.500 101.5v2.500h-2.500z" fill="#b0b0b0"/><path d="M4.500 122.1v2.500h-2.500z" fill="#b0b0b0"/><path d="M4.500 142.8v2.500h-2.500z" fill="#b0b0b0"/><path d="M4.500 163.5v2.500h-2.500z" fill="#b0b0b0"/><path d="M4.500 184.2v2.500h-2.500z" fill="#b0b0b0"/><path d="M4.500 207.5v2.500h-2.500z" fill="#b0b0b0"/><path d="M4.500 228.5v2.500h-2.500z" fill="#b0b0b0"/><path d="M4.500 249.2v2.500h-2.500z" fill="#b0b0b0"/><path d="M4.500 270.0v2.500h-2.500z" fill="#b0b0b0"/><path d="M4.500 290.5v2.500h-2.500z" fill="#b0b0b0"/><path d="M4.500 311.5v2.500h-2.500z" fill="#b0b0b0"/><path d="M4.500 332.5v2.500h-2.500z" fill="#b0b0b0"/><path d="M4.500 365.5v2.500h-2.500z" fill="#b0b0b0"/><path d="M4.500 386.5v2.500h-2.500z" fill="#b0b0b0"/><path d="M4.500 407.5v2.500h-2.500z" fill="#b0b0b0"/><path d="M4.500 424.1v2.500h-2.500z" fill="#b0b0b0"/><path d="M4.500 436.5v2.500h-2.500z" fill="#b0b0b0"/><path d="M4.500 461.5v2.500h-2.500z" fill="#b0b0b0"/><path d="M4.500 561.5v2.500h-2.500z" fill="#b0b0b0"/><path d="M0 191.500h8M0 359.500h8M0 457.500h8" stroke="#3e3e3e" stroke-width="1"/><path d="M0 487q3 0 3 3M1.800 489l1.200 2 1.300-2z" fill="none" stroke="#ddd" stroke-width="1"/><rect x="-1" y="501" width="5" height="24" fill="#000" stroke="#e8e8e8" stroke-width="1"/></svg>

<!-- actions panel -->
<div id="ap"><div id="aphead"><svg class="abs" style="left:154px;top:1px" width="20" height="8" viewBox="0 0 20 8"><path d="M3.500 2v3.600L1.200 3.800zM6.500 2v3.600L4.200 3.800z" fill="#cfcfcf"/><path d="M14.500 1.800l3.800 3.800M18.300 1.800l-3.800 3.800" stroke="#cfcfcf" stroke-width="1.200" fill="none"/></svg></div><div id="aptabs"><span class="t1">History</span><div class="t2"><span>Actions</span></div><svg class="abs" style="left:163px;top:3px" width="11" height="8" viewBox="0 0 11 8"><path d="M0 2.5h4L2 5z" fill="#cfcfcf"/><path d="M4.5 1.5h6M4.5 3.5h6M4.5 5.5h6" stroke="#b8b8b8" stroke-width="1"/></svg></div>
<div id="aplist">
<div class="row" style="top:-7px"><div class="bg" style="left:60px"></div><svg class="ck" viewBox="0 0 10 10"><path d="M1 5.5 L3.6 8.4 L9 1.2" fill="none" stroke="#f4f4f4" stroke-width="1.8"/></svg><div class="bx on"></div><div class="tri" style="left:52px"></div><span class="tx" style="left:64px">Flatten Image</span></div>
<div class="row" style="top:9px"><div class="bg" style="left:34px"></div><svg class="ck" viewBox="0 0 10 10"><path d="M1 5.5 L3.6 8.4 L9 1.2" fill="none" stroke="#f4f4f4" stroke-width="1.8"/></svg><div class="bx on"></div><div class="trd" style="left:38px"></div><svg class="abs" style="left:50px;top:3px" width="14" height="10" viewBox="0 0 14 10"><path d="M1 9V1.5h4l1 1.5h6.5V9z" fill="#d9d9d9"/><path d="M0.3 9.3l1.6-5h11.8l-1.6 5z" fill="#f0f0f0" stroke="#555" stroke-width=".6"/></svg><span class="tx" style="left:70px">Media Militia - Removal...</span></div>
<div class="row" style="top:25px"><div class="bg" style="left:60px"></div><svg class="ck" viewBox="0 0 10 10"><path d="M1 5.5 L3.6 8.4 L9 1.2" fill="none" stroke="#f4f4f4" stroke-width="1.8"/></svg><div class="bx"></div><div class="tri" style="left:52px"></div><span class="tx" style="left:64px">White BG Removal - Al...</span></div>
<div class="row" style="top:41px"><div class="bg" style="left:60px"></div><svg class="ck" viewBox="0 0 10 10"><path d="M1 5.5 L3.6 8.4 L9 1.2" fill="none" stroke="#f4f4f4" stroke-width="1.8"/></svg><div class="bx on"></div><div class="tri" style="left:52px"></div><span class="tx" style="left:64px">White BG Removal - Ma...</span></div>
<div class="row" style="top:57px"><div class="bg" style="left:60px"></div><svg class="ck" viewBox="0 0 10 10"><path d="M1 5.5 L3.6 8.4 L9 1.2" fill="none" stroke="#f4f4f4" stroke-width="1.8"/></svg><div class="bx on"></div><div class="trd" style="left:50px"></div><span class="tx" style="left:64px">White BG Removal - wit...</span></div>
<div class="row" style="top:73px"><div class="bg" style="left:74px"></div><svg class="ck" viewBox="0 0 10 10"><path d="M1 5.5 L3.6 8.4 L9 1.2" fill="none" stroke="#f4f4f4" stroke-width="1.8"/></svg><div class="bx"></div><div class="tri" style="left:65px"></div><span class="tx" style="left:79px">Stop</span></div>
<div class="row" style="top:89px"><div class="bg" style="left:74px"></div><svg class="ck" viewBox="0 0 10 10"><path d="M1 5.5 L3.6 8.4 L9 1.2" fill="none" stroke="#f4f4f4" stroke-width="1.8"/></svg><div class="bx on"></div><span class="tx" style="left:79px">Levels</span></div>
<div class="row" style="top:105px"><div class="bg" style="left:74px"></div><svg class="ck" viewBox="0 0 10 10"><path d="M1 5.5 L3.6 8.4 L9 1.2" fill="none" stroke="#f4f4f4" stroke-width="1.8"/></svg><div class="bx"></div><div class="tri" style="left:65px"></div><span class="tx" style="left:79px">Set Selection</span></div>
<div class="row" style="top:121px"><div class="bg" style="left:74px"></div><svg class="ck" viewBox="0 0 10 10"><path d="M1 5.5 L3.6 8.4 L9 1.2" fill="none" stroke="#f4f4f4" stroke-width="1.8"/></svg><div class="bx"></div><span class="tx" style="left:79px">Copy</span></div>
<div class="row" style="top:137px"><div class="bg" style="left:74px"></div><svg class="ck" viewBox="0 0 10 10"><path d="M1 5.5 L3.6 8.4 L9 1.2" fill="none" stroke="#f4f4f4" stroke-width="1.8"/></svg><div class="bx"></div><div class="tri" style="left:65px"></div><span class="tx" style="left:79px">Make</span></div>
<div class="row" style="top:153px"><div class="bg" style="left:74px"></div><svg class="ck" viewBox="0 0 10 10"><path d="M1 5.5 L3.6 8.4 L9 1.2" fill="none" stroke="#f4f4f4" stroke-width="1.8"/></svg><div class="bx"></div><div class="tri" style="left:65px"></div><span class="tx" style="left:79px">Paste</span></div>
<div id="apv1"></div><div id="apv2"></div><div id="apsb"><div class="ua"></div><div class="th"></div><div class="da"></div></div></div>
<div id="apbar"><svg class="abs" style="left:0;top:0" width="176" height="14" viewBox="0 0 176 14">
<rect x="28" y="5" width="6" height="6" fill="#8c8c8c"/>
<circle cx="54" cy="8" r="3.8" fill="#dcdcdc"/>
<path d="M74 4.2v7.6l7-3.8z" fill="#dcdcdc"/>
<path d="M95.5 11.5v-8h4.2l1 1.6h5.3v6.4z" fill="#d6d6d6"/>
<path d="M121.5 3.5h8.5v8.5h-4.5v-4.5h-4z" fill="#e6e6e6"/><path d="M121.5 9.5h3v2.5z" fill="#e6e6e6"/>
<path d="M144.5 6h8v6h-8zM143.5 4.6h10v1h-10zM146.8 3.2h3.4v1.4h-3.4z" fill="#d0d0d0"/><path d="M146.5 7.5v3M148.5 7.5v3M150.5 7.5v3" stroke="#666" stroke-width=".8"/>
<path d="M174 6l-6 7M174 9l-3.5 4" stroke="#3e3e3e" stroke-width="1"/>
</svg></div><div id="apfoot"></div></div>

<!-- right dock -->
<div id="rgrad"></div>
<div id="rp">
 <div class="r1"></div>
 <div class="sel"><span>Normal</span><svg class="abs" style="left:94px;top:7px" width="5" height="9" viewBox="0 0 5 9"><path d="M0 3.5L2.5 .5 5 3.5zM0 5.5l2.5 3 2.5-3z" fill="#e8e8e8"/></svg></div>
 <span class="lb" style="left:112px;top:36px;letter-spacing:-.6px">Opacity:</span><div class="vb" style="left:146px;top:34px">100%</div><div class="ab" style="left:174px;top:34px"></div>
 <div class="r2"></div>
 <span class="lb" style="left:5px;top:60px;font-weight:normal;color:#d2d2d2">Lock:</span>
 <svg class="abs" style="left:30px;top:58px" width="66" height="14" viewBox="0 0 66 14">
  <g fill="#a8a8a8"><rect x="1" y="3" width="9" height="9" fill="#7a7a7a"/><rect x="1" y="3" width="3" height="3"/><rect x="7" y="3" width="3" height="3"/><rect x="4" y="6" width="3" height="3"/><rect x="1" y="9" width="3" height="3"/><rect x="7" y="9" width="3" height="3"/></g>
  <path d="M30 1.5L23 9.5l1.2 1.2L31 2.3z" fill="#b4b4b4"/><path d="M18 12c2.500 .2 5-.3 6-1.600l-1.500-1.500c-1.200 .3-1.800 2.300-4.500 3.100z" fill="#b4b4b4"/>
  <path d="M41.500 2l2 2.500h-1.400v2.600h2.600V5.700l2.500 2-2.500 2V8.300h-2.600v2.600h1.400l-2 2.500-2-2.500h1.400V8.300h-2.600v1.400l-2.500-2 2.500-2v1.400h2.600V4.500h-1.400z" fill="#a8a8a8"/>
  <path d="M55 7h8v5.500h-8z" fill="#a8a8a8"/><path d="M56.600 7V5.200a2.400 2.400 0 014.800 0V7" fill="none" stroke="#a8a8a8" stroke-width="1.300"/><rect x="58.300" y="9" width="1.400" height="2" fill="#555"/>
 </svg>
 <span class="lb" style="left:130px;top:59px;letter-spacing:-.8px">Fill:</span><div class="vb" style="left:146px;top:56px">100%</div><div class="ab" style="left:174px;top:56px"></div>
 <div id="llist">
  <div class="eyecol"></div>
  <svg class="abs" style="left:7px;top:9px" width="11" height="8" viewBox="0 0 11 8"><path d="M.3 4C2 1.2 3.8.5 5.5.5S9 1.2 10.7 4C9 6.8 7.2 7.5 5.5 7.5S2 6.8.3 4z" fill="#e0e0e0"/><circle cx="5.5" cy="3.8" r="2.3" fill="#3a3a3a"/><circle cx="4.8" cy="3" r=".8" fill="#e0e0e0"/></svg> <svg class="abs" style="left:7px;top:35px" width="11" height="8" viewBox="0 0 11 8"><path d="M.3 4C2 1.2 3.8.5 5.5.5S9 1.2 10.7 4C9 6.8 7.2 7.5 5.5 7.5S2 6.8.3 4z" fill="#e0e0e0"/><circle cx="5.5" cy="3.8" r="2.3" fill="#3a3a3a"/><circle cx="4.8" cy="3" r=".8" fill="#e0e0e0"/></svg>
  <div class="lrow on" style="top:0"><div class="th" style="background-color:#fff;background-image:linear-gradient(45deg,#ccc 25%,transparent 25%,transparent 75%,#ccc 75%),linear-gradient(45deg,#ccc 25%,transparent 25%,transparent 75%,#ccc 75%);background-size:6px 6px;background-position:0 0,3px 3px"><svg class="abs" style="left:8px;top:6px" width="14" height="13" viewBox="0 0 16 14"><path d="M1 12.5C1 8 4 4.5 8 3.6 11 3 13.5 2 15.5.3 15 5 13 9.5 9.5 11.5 6.5 13.2 3.5 12.6 1 12.5z" fill="#c8161a"/></svg></div><span>Layer 8</span></div>
  <div class="lrow" style="top:26px"><div class="th"><svg class="abs" style="left:5px;top:5px" width="15" height="11" viewBox="0 0 16 14"><path d="M1 12.5C1 8 4 4.5 8 3.6 11 3 13.5 2 15.5.3 15 5 13 9.5 9.5 11.5 6.5 13.2 3.5 12.6 1 12.5z" fill="#c8161a"/></svg></div><span>Background</span></div>
 </div>
 <div id="lsb"></div>
 <div id="lfoot"><svg class="abs" style="left:0;top:0" width="192" height="5" viewBox="0 0 192 5"><g fill="none" stroke="#b5b5b5" stroke-width="1.300"><path d="M31 6a4 3 0 018 0"/><path d="M54 6q0-3 3-3"/><path d="M98 6a3 3.500 0 016 0"/><path d="M162 6v-1.500h6V6"/></g><g fill="#b8b8b8"><rect x="75" y="2.500" width="7" height="4"/><path d="M118 6V2.500h3.500l1 1.500h3.500V6z"/><rect x="139" y="2" width="7" height="4"/></g></svg></div>
</div>
<div id="fr"><div class="top"><svg class="abs" style="left:6px;top:38px" width="15" height="18" viewBox="0 0 15 18"><path d="M1 4h12M5 15C5 8 8 4.500 13 4" fill="none" stroke="#e0e0e0" stroke-width="1.200"/><rect x="0" y="2.500" width="3" height="3" fill="#eee"/><circle cx="5" cy="15.500" r="1.700" fill="none" stroke="#e0e0e0" stroke-width="1"/></svg></div></div>

<div id="status"><span style="left:2px">56,7%</span><span style="left:39px;top:2px;width:15px;height:8px;border:1.5px solid #e0e0e0"></span><span style="left:59px;top:2px;width:7px;height:8px;border:1.5px solid #e0e0e0;border-bottom:none"></span><span style="left:100px">Scratch: 396,6M/1,91G</span><span style="left:209px;top:2px">▸</span></div><div id="hscroll"></div><div id="rcorner"></div>
<!-- banner -->
<div id="banner"><span>Background <b>Remove</b></span></div>
</body>
</html>
